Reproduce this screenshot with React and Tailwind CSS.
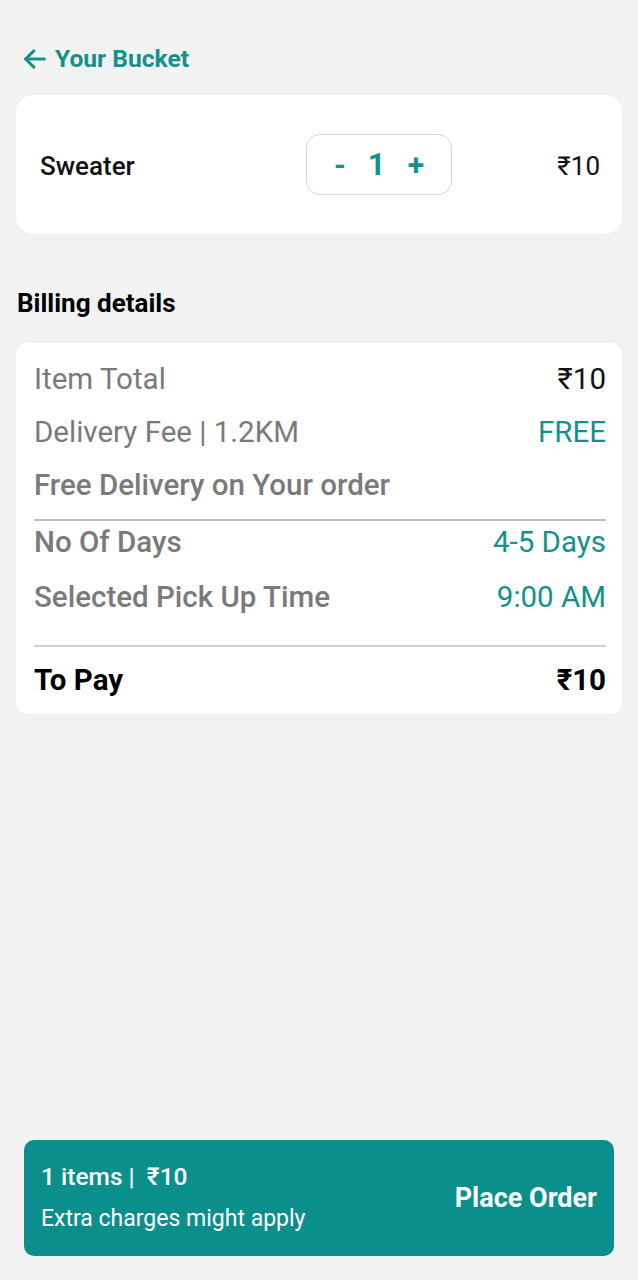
import React from "react";

const teal = "text-[#14918b]";

function Row({ label, value, valueClass = "text-[#7a7a7a]", labelClass = "text-[#7a7a7a]" }) {
  return (
    <div className="flex items-center justify-between h-[53px]">
      <span className={labelClass}>{label}</span>
      <span className={valueClass}>{value}</span>
    </div>
  );
}

export default function App() {
  return (
    <div
      className="h-[1280px] w-[638px] bg-[#f2f2f2] flex flex-col"
      style={{ fontFamily: "Roboto, 'Noto Sans', sans-serif" }}
    >
      {/* Header */}
      <div className="pt-[40px] pl-[21px] flex items-center h-[78px] gap-[6px]">
        <svg width="28" height="28" viewBox="0 0 24 24" fill="none" stroke="#14918b" strokeWidth="2.6" strokeLinecap="round" strokeLinejoin="round">
          <path d="M20 12H4" />
          <path d="M11 5l-7 7 7 7" />
        </svg>
        <span className="text-[24.6px] font-bold text-[#14918b] leading-none">Your Bucket</span>
      </div>

      {/* Item card */}
      <div className="mx-[16px] mt-[17px] h-[139px] bg-white rounded-[18px] flex items-center pl-[24px] pr-[22px]">
        <span className="flex-1 text-[26px] font-medium text-[#111] pt-[3px]">Sweater</span>
        <div className="w-[146px] h-[61px] border border-[#d6d6d6] rounded-[14px] flex items-center justify-center gap-[22px] text-[#14918b] font-bold">
          <span className="text-[30px] leading-none">-</span>
          <span className="text-[31px] leading-none">1</span>
          <span className="text-[30px] leading-none">+</span>
        </div>
        <span className="w-[148px] text-right text-[26px] text-[#111] pt-[3px]">₹10</span>
      </div>

      {/* Billing heading */}
      <div className="pl-[17px] mt-[51px] h-[36px] flex items-center text-[26px] font-bold text-black">
        Billing details
      </div>

      {/* Billing card */}
      <div className="mx-[16px] mt-[22px] bg-white rounded-[12px] pl-[18px] pr-[16px] pt-[10px] text-[29.5px]">
        <Row label="Item Total" value="₹10" valueClass="text-[#111]" />
        <Row label="Delivery Fee | 1.2KM" value="FREE" valueClass={teal} />
        <div className="h-[53px] flex items-center text-[#7a7a7a] font-medium">Free Delivery on Your order</div>
        <div className="h-[2px] bg-[#bdbdbd] mt-[7px]" />
        <div className="h-[42px] flex items-center justify-between">
          <span className="text-[#7a7a7a] font-medium">No Of Days</span>
          <span className={teal}>4-5 Days</span>
        </div>
        <div className="h-[68px] flex items-center justify-between">
          <span className="text-[#7a7a7a] font-medium">Selected Pick Up Time</span>
          <span className={teal}>9:00 AM</span>
        </div>
        <div className="h-[2px] bg-[#d0d0d0] mt-[14px]" />
        <div className="h-[67px] flex items-center justify-between font-bold text-black">
          <span>To Pay</span>
          <span>₹10</span>
        </div>
      </div>

      {/* Bottom bar */}
      <div className="mt-auto mb-[24px] mx-[24px] h-[116px] bg-[#0a8f8c] rounded-[10px] flex items-center justify-between pl-[17px] pr-[17px] text-white">
        <div className="flex flex-col">
          <span className="text-[24.5px] font-medium leading-[30px]">1 items |&nbsp; ₹10</span>
          <span className="text-[23px] leading-[30px] mt-[12px]">Extra charges might apply</span>
        </div>
        <span className="text-[27px] font-bold">Place Order</span>
      </div>
    </div>
  );
}
